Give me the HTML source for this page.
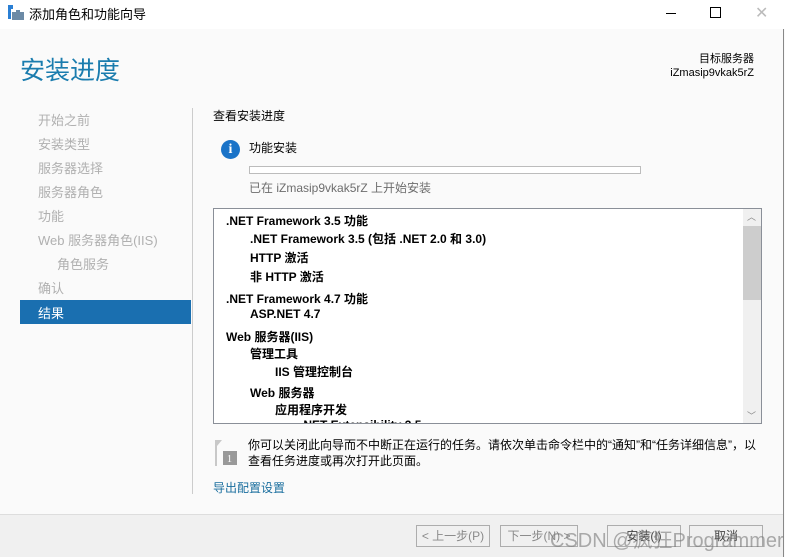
<!DOCTYPE html><html><head><meta charset="utf-8"><style>
*{margin:0;padding:0;box-sizing:border-box}
body{width:785px;height:557px;overflow:hidden;background:#fafafa;font-family:"Liberation Sans","Noto Sans CJK SC",sans-serif;font-size:12px;color:#000;position:relative}
.a{position:absolute;white-space:nowrap}
.nav{left:38px;color:#b0b0b0;font-size:13px}
.li{position:absolute;font-size:12px;font-weight:bold;white-space:nowrap}
.btn{position:absolute;top:525px;height:22px;border:1px solid #adadad;background:#f0f0f0;color:#8a8a8a;font-size:12px;text-align:center;line-height:20px}
</style></head><body>
<div class="a" style="left:0;top:0;width:785px;height:29px;background:#fff"></div>
<svg class="a" style="left:7px;top:5px" width="18" height="16"><rect x="1" y="0" width="5" height="4" fill="#2a7fd4"/><rect x="1" y="4" width="3" height="10" fill="#2a7fd4"/><rect x="5" y="7" width="12" height="8" fill="#6c8aa6"/><rect x="9" y="5" width="4" height="2" fill="#6c8aa6"/></svg>
<div class="a" style="left:29px;top:4px;font-size:13px">添加角色和功能向导</div>
<div class="a" style="left:666px;top:13px;width:10px;height:1px;background:#000"></div>
<div class="a" style="left:710px;top:7px;width:11px;height:11px;border:1px solid #000"></div>
<div class="a" style="left:755px;top:3px;font-size:16px;color:#bbb">✕</div>
<div class="a" style="left:783px;top:29px;width:1px;height:528px;background:#888"></div>
<div class="a" style="left:20px;top:51px;font-size:25px;color:#1a7cae">安装进度</div>
<div class="a" style="right:31px;top:52px;font-size:11px;text-align:right;line-height:14px">目标服务器<br>iZmasip9vkak5rZ</div>
<div class="a nav" style="top:110px">开始之前</div>
<div class="a nav" style="top:134px">安装类型</div>
<div class="a nav" style="top:158px">服务器选择</div>
<div class="a nav" style="top:182px">服务器角色</div>
<div class="a nav" style="top:206px">功能</div>
<div class="a nav" style="top:230px">Web 服务器角色(IIS)</div>
<div class="a nav" style="top:254px;left:57px">角色服务</div>
<div class="a nav" style="top:278px">确认</div>
<div class="a" style="left:20px;top:300px;width:171px;height:24px;background:#1a6fb0"></div>
<div class="a" style="left:38px;top:303px;color:#fff;font-size:13px">结果</div>
<div class="a" style="left:192px;top:108px;width:1px;height:386px;background:#ccc"></div>
<div class="a" style="left:213px;top:107px">查看安装进度</div>
<div class="a" style="left:221px;top:140px;width:19px;height:19px;border-radius:50%;background:#1a73c8;color:#fff;font-weight:bold;font-family:'Liberation Serif',serif;font-size:14px;text-align:center;line-height:19px">i</div>
<div class="a" style="left:249px;top:139px">功能安装</div>
<div class="a" style="left:249px;top:166px;width:392px;height:8px;border:1px solid #bcbcbc;background:#fff"></div>
<div class="a" style="left:249px;top:179px;color:#6d6d6d">已在 iZmasip9vkak5rZ 上开始安装</div>
<div class="a" style="left:213px;top:208px;width:549px;height:216px;border:1px solid #8a8f98;background:#fff;overflow:hidden">
<div class="li" style="left:12px;top:3px">.NET Framework 3.5 功能</div>
<div class="li" style="left:36px;top:21px">.NET Framework 3.5 (包括 .NET 2.0 和 3.0)</div>
<div class="li" style="left:36px;top:40px">HTTP 激活</div>
<div class="li" style="left:36px;top:59px">非 HTTP 激活</div>
<div class="li" style="left:12px;top:81px">.NET Framework 4.7 功能</div>
<div class="li" style="left:36px;top:98px">ASP.NET 4.7</div>
<div class="li" style="left:12px;top:119px">Web 服务器(IIS)</div>
<div class="li" style="left:36px;top:136px">管理工具</div>
<div class="li" style="left:61px;top:154px">IIS 管理控制台</div>
<div class="li" style="left:36px;top:175px">Web 服务器</div>
<div class="li" style="left:61px;top:192px">应用程序开发</div>
<div class="li" style="left:86px;top:209px">.NET Extensibility 3.5</div>
<div class="a" style="left:529px;top:0;width:18px;height:214px;background:#f0f0f0"></div>
<div class="a" style="left:529px;top:17px;width:18px;height:74px;background:#cdcdcd"></div>
<div class="a" style="left:533px;top:1px;font-size:9px;color:#888">︿</div>
<div class="a" style="left:533px;top:200px;font-size:9px;color:#888">﹀</div>
</div>
<svg class="a" style="left:214px;top:440px" width="24" height="26"><path d="M1 0 L8 0 L3 6 L3 26 L1 26Z" fill="#c8c8c8"/><rect x="9" y="11" width="14" height="14" fill="#999"/><text x="13" y="22" font-size="10" fill="#fff" font-family="Liberation Serif">1</text></svg>
<div class="a" style="left:248px;top:437px;line-height:16px">你可以关闭此向导而不中断正在运行的任务。请依次单击命令栏中的“通知”和“任务详细信息”，以<br>查看任务进度或再次打开此页面。</div>
<div class="a" style="left:213px;top:479px;color:#1a6e9e">导出配置设置</div>
<div class="a" style="left:0;top:514px;width:783px;height:43px;background:#f0f0f0;border-top:1px solid #ddd"></div>
<div class="btn" style="left:416px;width:74px">&lt; 上一步(P)</div>
<div class="btn" style="left:500px;width:78px">下一步(N) &gt;</div>
<div class="btn" style="left:607px;width:74px;color:#444">安装(I)</div>
<div class="btn" style="left:689px;width:74px;color:#444">取消</div>
<div class="a" style="left:550px;top:524px;font-size:20px;color:rgba(120,120,120,0.6)">CSDN @疯狂Programmer</div>
</body></html>
